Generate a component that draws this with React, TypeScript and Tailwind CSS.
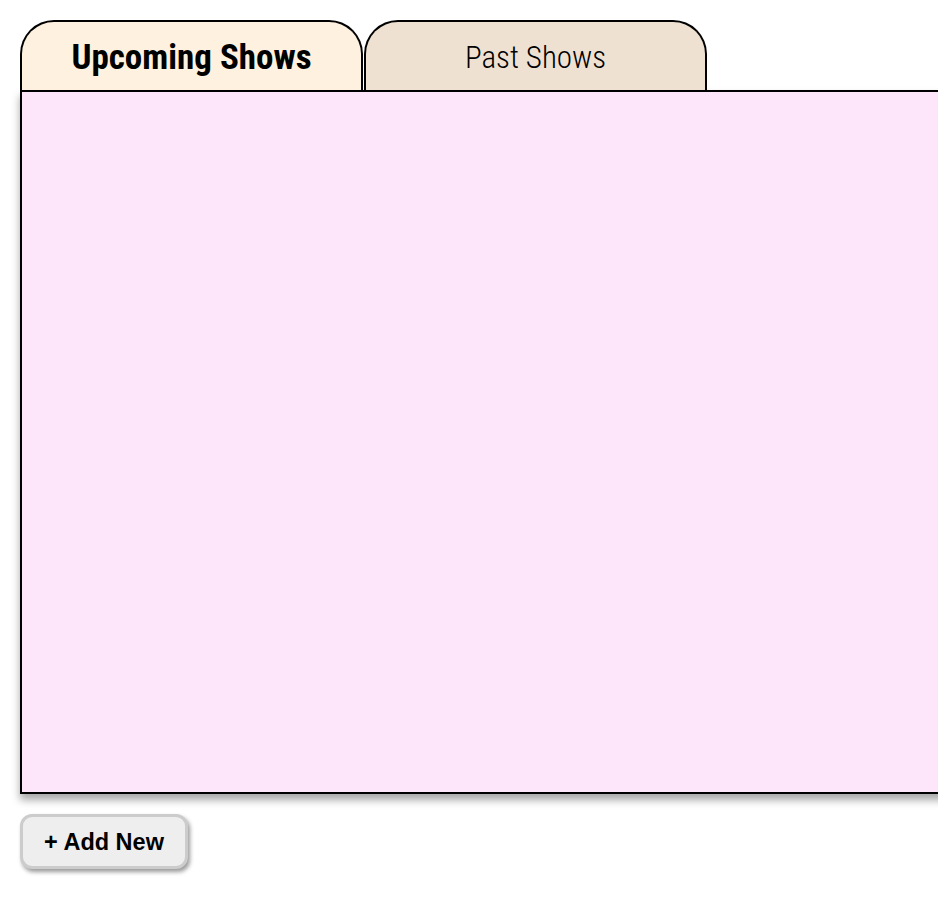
import React, { useState } from "react";

const tabs = ["Upcoming Shows", "Past Shows"];

export default function App() {
  const [active, setActive] = useState<number>(0);

  return (
    <div className="w-full overflow-x-hidden bg-white min-h-[912px] pt-5 font-['Roboto',sans-serif]">
      <div className="flex pl-5 gap-[1px]">
        {tabs.map((t, i) => (
          <button
            key={t}
            onClick={() => setActive(i)}
            className={`w-[343px] h-[70px] border-2 border-b-0 border-black rounded-t-[34px] flex items-center justify-center pt-1 [font-stretch:condensed] ${
              i === active
                ? "bg-[#fef1df] text-[35px] font-bold"
                : "bg-[#efe1d1] text-[31px] font-light"
            }`}
          >
            {t}
          </button>
        ))}
      </div>
      <div className="ml-5 w-full h-[704px] border-2 border-black bg-[#fde6fa] shadow-[0_6px_8px_rgba(0,0,0,0.35)]"></div>
      <button className="ml-5 mt-5 w-[168px] h-[55px] pt-[2px] rounded-xl bg-[#eeeeee] border-[3px] border-[#cccccc] shadow-[2px_3px_4px_rgba(0,0,0,0.4)] font-['Liberation_Sans',Arial,sans-serif] font-bold text-[23.5px] text-black">
        + Add New
      </button>
    </div>
  );
}
